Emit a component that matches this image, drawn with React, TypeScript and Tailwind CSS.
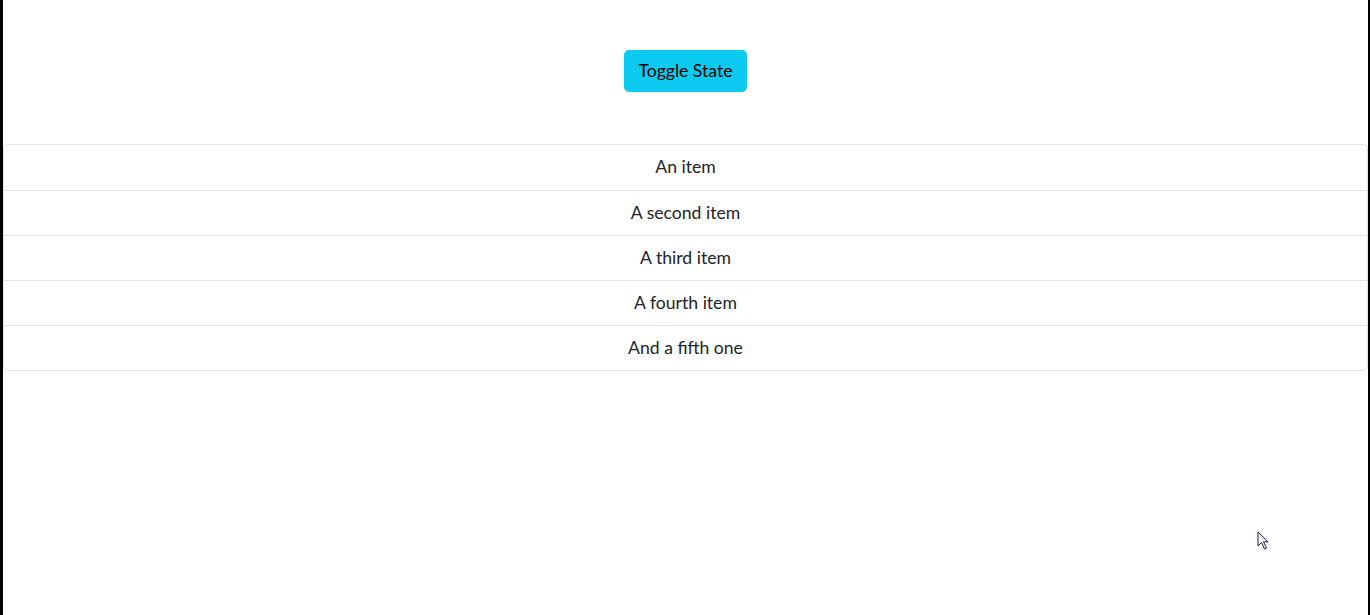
import React from "react";

const items = ["An item", "A second item", "A third item", "A fourth item", "And a fifth one"];

export default function App() {
  return (
    <div className="relative flex h-[615px] w-[1370px] bg-white overflow-hidden" style={{ fontFamily: '"Segoe UI", Lato, "Noto Sans", sans-serif' }}>
      <div className="w-[3px] shrink-0 bg-black" />
      <div className="flex-1 flex flex-col items-center pt-[50px]">
        <button className="h-[42px] px-[14px] rounded-[5px] bg-[#0dcaf0] text-[17.6px] text-black leading-[26px]">
          Toggle State
        </button>
        <ul className="mt-[52px] w-full border border-[#dee2e6] rounded-[5px]">
          {items.map((t, i) => (
            <li
              key={t}
              className={`h-[45px] flex items-center justify-center text-[17.6px] text-[#212529] ${i > 0 ? "border-t border-[#dee2e6]" : ""}`}
            >
              {t}
            </li>
          ))}
        </ul>
      </div>
      <div className="w-[2px] shrink-0 bg-black" />
      <svg className="absolute left-[1257px] top-[531px]" width="14" height="20" viewBox="0 0 14 20">
        <path d="M1 1 L1 15 L4.5 11.5 L7.5 18 L9.5 17 L6.5 10.8 L11 10.8 Z" fill="white" stroke="#1c1a4a" strokeWidth="1" strokeLinejoin="round" />
      </svg>
    </div>
  );
}
